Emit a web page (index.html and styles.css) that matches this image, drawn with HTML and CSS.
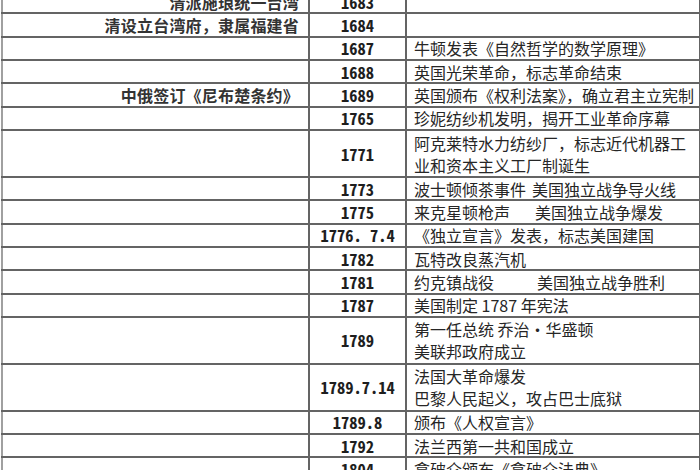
FILE: index.html
```html
<!DOCTYPE html>
<html lang="zh-CN">
<head>
<meta charset="utf-8">
<title>历史大事年表</title>
<link rel="stylesheet" href="styles.css">
</head>
<body>
<table class="chron">
  <colgroup>
    <col class="c-cn">
    <col class="c-year">
    <col class="c-world">
  </colgroup>
  <tbody>
    <tr class="r1"><td class="cn">清派施琅统一台湾</td><td class="year">1683</td><td class="world"></td></tr>
    <tr class="r1"><td class="cn">清设立台湾府，隶属福建省</td><td class="year">1684</td><td class="world"></td></tr>
    <tr class="r1"><td class="cn"></td><td class="year">1687</td><td class="world">牛顿发表《自然哲学的数学原理》</td></tr>
    <tr class="r1"><td class="cn"></td><td class="year">1688</td><td class="world">英国光荣革命，标志革命结束</td></tr>
    <tr class="r1"><td class="cn">中俄签订《尼布楚条约》</td><td class="year">1689</td><td class="world">英国颁布《权利法案》，确立君主立宪制</td></tr>
    <tr class="r1"><td class="cn"></td><td class="year">1765</td><td class="world">珍妮纺纱机发明，揭开工业革命序幕</td></tr>
    <tr class="r2"><td class="cn"></td><td class="year">1771</td><td class="world">阿克莱特水力纺纱厂，标志近代机器工<br>业和资本主义工厂制诞生</td></tr>
    <tr class="r1"><td class="cn"></td><td class="year">1773</td><td class="world">波士顿倾茶事件<span class="gap-s"></span>美国独立战争导火线</td></tr>
    <tr class="r1"><td class="cn"></td><td class="year">1775</td><td class="world">来克星顿枪声<span class="gap-m"></span>美国独立战争爆发</td></tr>
    <tr class="r1"><td class="cn"></td><td class="year">1776. 7.4</td><td class="world">《独立宣言》发表，标志美国建国</td></tr>
    <tr class="r1"><td class="cn"></td><td class="year">1782</td><td class="world">瓦特改良蒸汽机</td></tr>
    <tr class="r1"><td class="cn"></td><td class="year">1781</td><td class="world">约克镇战役<span class="gap-l"></span>美国独立战争胜利</td></tr>
    <tr class="r1"><td class="cn"></td><td class="year">1787</td><td class="world">美国制定 1787 年宪法</td></tr>
    <tr class="r2"><td class="cn"></td><td class="year">1789</td><td class="world">第一任总统 乔治·华盛顿<br>美联邦政府成立</td></tr>
    <tr class="r2"><td class="cn"></td><td class="year">1789.7.14</td><td class="world">法国大革命爆发<br>巴黎人民起义，攻占巴士底狱</td></tr>
    <tr class="r1"><td class="cn"></td><td class="year">1789.8</td><td class="world">颁布《人权宣言》</td></tr>
    <tr class="r1"><td class="cn"></td><td class="year">1792</td><td class="world">法兰西第一共和国成立</td></tr>
    <tr class="r1"><td class="cn"></td><td class="year">1804</td><td class="world">拿破仑颁布《拿破仑法典》</td></tr>
  </tbody>
</table>
</body>
</html>
```

FILE: styles.css
```css
html, body {
  margin: 0;
  padding: 0;
  background: #ffffff;
  overflow: hidden;
}

.chron {
  border-collapse: collapse;
  table-layout: fixed;
  width: 698px;
  margin: -11px 0 0 1px;
  font-family: "Noto Sans CJK SC", "Noto Sans", sans-serif;
  color: #2a2a2a;
}

.c-cn { width: 307px; }
.c-year { width: 97px; }
.c-world { width: 294px; }

.chron td {
  border: 2px solid #646464;
  padding: 0;
  vertical-align: middle;
  line-height: 20px;
  white-space: nowrap;
  overflow: hidden;
}

.chron .r2 td {
  line-height: 22px;
}

.chron td.cn {
  border-left-color: #a0a0a0;
}

.r1 { height: 23.37px; }
.r2 { height: 46.74px; }

.cn {
  text-align: right;
  padding-right: 9px !important;
  font-size: 16px;
  font-weight: 700;
  letter-spacing: 0.2px;
  color: #333333;
}

.year {
  text-align: center;
  font-family: "Noto Sans Mono CJK SC", "Liberation Sans Narrow", "Liberation Mono", monospace;
  font-size: 16.5px;
  font-weight: 700;
  color: #1e1e1e;
  border-left-color: #2e2e2e !important;
}

.world {
  text-align: left;
  padding-left: 7px !important;
  font-size: 16px;
  font-weight: 400;
  color: #262626;
}

.gap-s { display: inline-block; width: 6px; }
.gap-m { display: inline-block; width: 25px; }
.gap-l { display: inline-block; width: 43px; }
```
